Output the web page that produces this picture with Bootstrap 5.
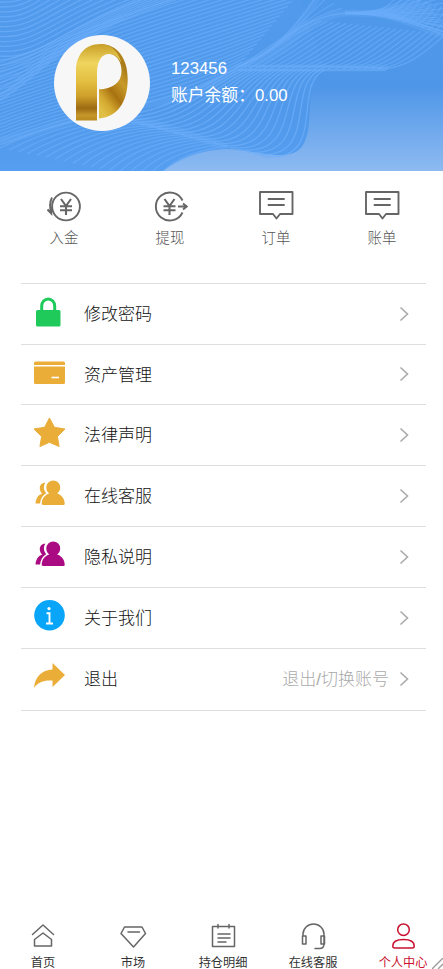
<!DOCTYPE html>
<html lang="zh-CN">
<head>
<meta charset="utf-8">
<meta name="viewport" content="width=device-width, initial-scale=1">
<title>个人中心</title>
<link rel="stylesheet" href="https://cdn.jsdelivr.net/npm/bootstrap@5.3.0/dist/css/bootstrap.min.css">
<style>
body{font-family:"Liberation Sans","Noto Sans CJK SC",sans-serif;color:#333;background:#fff;font-weight:300}
.page{height:969px}
.hero{height:171px;background:linear-gradient(#4f99eb 0,#4e96e8 50%,#8dbaf1 100%);padding:35px 0 0 54px;gap:21px}
.waves{left:0;top:0}
.avatar{width:96px;height:96px;background:#f7f7f7}
.who{font-size:16.8px;line-height:27px;padding-top:20px;font-weight:400}
.quick{padding:18px 8px 0 11px;height:112px;font-size:14.4px;color:#555}
.quick svg{display:block;margin-bottom:3px}
.menu{margin:0 17px 0 21px;border-top:1px solid #dedede}
.menu-item{height:61px;border-bottom:1px solid #dedede;padding:0 17px 0 12px;font-size:17px;color:#111}
.menu-item.short{height:60px}
.menu-item.tall{height:62px}
.menu-item span{padding-top:1px}
.menu-item.short span{padding-top:3px}
.menu-item .chevron{margin-top:-1px}
.menu-item .glyph{margin:-4px 18px 0 0}
.menu-item .people{margin-top:-7px}
.menu-item .hint{color:#aaa;margin-right:10px}
.tabs{margin:0 -5px 0 -2px;height:48px;font-size:12.2px;line-height:12px;font-weight:400;color:#333}
.tabs a{color:inherit;width:90px}
.tabs a.current{color:#c8102e}
.tabs svg{display:block;flex-shrink:0;margin-bottom:4px}
.line{fill:none;stroke:#666;stroke-width:1.5;stroke-linejoin:round;stroke-linecap:round}
.grip{right:0;bottom:0}
</style>
<script src="https://cdn.jsdelivr.net/npm/bootstrap@5.3.0/dist/js/bootstrap.bundle.min.js"></script>
</head>
<body>
<svg width="0" height="0" class="position-absolute">
<defs>
<symbol id="people" viewBox="0 0 33 32"><path d="M12.300 5.800C9 5.500 6.800 8 6.800 11.200c0 2.300.9 4 2.400 5.200C5 18 2.800 21.500 2.500 26.500H7c.6-5 2.600-8.200 6.200-10.300-2.500-3-3.100-6.800-.9-10.400z" fill="currentColor"/><path d="M20.300 3.500a6.900 6.900 0 0 1 6.900 7c0 2.500-1.200 4.700-3.100 6 4.500 1.200 7.400 5.200 7.600 10 0 1-.4 1.500-1.300 1.500H10c-.9 0-1.300-.5-1.300-1.400.2-5 3-8.800 7.600-10.100-1.900-1.300-3-3.500-3-6a6.900 6.900 0 0 1 7-7z" fill="currentColor"/></symbol>
<symbol id="bubble" viewBox="0 0 36 32"><g fill="none" stroke="#666" stroke-width="1.900" stroke-linejoin="round" stroke-linecap="round"><path d="M2 2h32.500v22H22l-3.500 4.500-3.500-4.500H2z"/><path d="M10.500 9h15.500M10.500 15h15.500"/></g></symbol>
<symbol id="chev" viewBox="0 0 10 16"><path d="M1.500 1.500 8.500 8l-7 6.500" fill="none" stroke="#aaa" stroke-width="1.600"/></symbol>
</defs>
</svg>
<div class="page d-flex flex-column overflow-hidden position-relative">
<header class="hero position-relative d-flex overflow-hidden">
  <svg class="waves position-absolute" width="443" height="171"><defs><linearGradient id="sea" x2="0" y2="1"><stop stop-color="#529bec"/><stop offset=".65" stop-color="#5099ea"/><stop offset="1" stop-color="#569ff0"/></linearGradient></defs><path d="M0 0H300L325 70C302 84 316 125 303 145C290 166 250 148 225 149C195 151 178 160 163 171H0z" fill="url(#sea)"/>
  <g fill="none" stroke="#6eb0fb" stroke-width="7" stroke-linecap="round" opacity=".25"><path d="M0 141C60 128 90 108 130 106S200 92 238 67M316 0C290 40 270 55 238 67C290 60 300 14 350 13S410 26 443 34M240 68H385M110 119C160 120 190 135 225 147M0 98C40 70 60 40 120 18"/></g>
  <g id="wave-lines" fill="none" stroke="#6cadfa" stroke-width="1.300"/></svg>
  <div class="avatar rounded-circle position-relative flex-shrink-0">
    <svg class="d-block" width="96" height="96" viewBox="0 0 96 96"><defs><linearGradient id="goldA" x2="0" y2="1"><stop stop-color="#c99f28"/><stop offset=".25" stop-color="#efd55e"/><stop offset=".5" stop-color="#e2bd3f"/><stop offset=".68" stop-color="#cfa02a"/><stop offset=".84" stop-color="#9c6b12"/><stop offset=".93" stop-color="#c6982b"/><stop offset="1" stop-color="#b98a1f"/></linearGradient><linearGradient id="goldB" x1=".8" x2=".3" y2="1"><stop stop-color="#c9a02c"/><stop offset=".2" stop-color="#a97a18"/><stop offset=".42" stop-color="#c89a28"/><stop offset=".65" stop-color="#a87211"/><stop offset=".85" stop-color="#d4a930"/><stop offset="1" stop-color="#e0bf45"/></linearGradient></defs>
    <path d="M45 54.300C58 54 67.500 48 67.500 36C67.500 26 62 19 55 19L46 9C64 9 73.700 24 73.700 44C73.700 69 62 82 45 83.500z" fill="url(#goldB)"/><path d="M22 85.500V36C22 20 31 9 46.500 9C56 9 64 15 67.500 28C64 21.500 60 19 55 19C47 19 43 27 43 38V85.500z" fill="url(#goldA)"/></svg>
  </div>
  <div class="who text-white position-relative"><div>123456</div><div>账户余额：0.00</div></div>
</header>
<section class="quick d-flex text-center">
  <div class="col-3 d-flex flex-column align-items-center"><svg width="36" height="36" viewBox="0 0 36 36"><g fill="none" stroke="#666" stroke-width="1.900"><circle cx="20" cy="17.500" r="13.900"/><path stroke-width="2.100" d="m15 10 5 7 5-7M14 17.200h12M14 21.200h12M20 16v10"/><path d="M6 8.500C3.500 13.500 3.500 18.500 5.300 24.500M1.500 20.500 5.300 24.500V18"/></g></svg><span>入金</span></div>
  <div class="col-3 d-flex flex-column align-items-center"><svg width="36" height="36" viewBox="0 0 36 36"><g fill="none" stroke="#666" stroke-width="1.900"><path d="M30.500 11.500A14 14 0 1 0 30.500 23.500"/><path stroke-width="2.100" d="m12.500 10 5 7 5-7M11.500 17.200h12M11.500 21.200h12M17.500 16v10"/><path d="M26 17.500h8.500M31 14.500l3.700 3-3.700 3"/></g></svg><span>提现</span></div>
  <div class="col-3 d-flex flex-column align-items-center"><svg width="36" height="36" viewBox="0 -1 36 36"><use href="#bubble" width="36" height="32"/></svg><span>订单</span></div>
  <div class="col-3 d-flex flex-column align-items-center"><svg width="36" height="36" viewBox="0 -1 36 36"><use href="#bubble" width="36" height="32"/></svg><span>账单</span></div>
</section>
<main class="menu">
  <div class="menu-item d-flex align-items-center"><svg class="glyph" width="33" height="32" viewBox="0 0 33 32"><rect x="3" y="14" width="24.500" height="16.500" rx="1.500" fill="#1fca5a"/><path d="M8.700 15.500V10a6.500 7 0 0 1 13 0V15.500" fill="none" stroke="#1fca5a" stroke-width="3"/></svg><span class="me-auto">修改密码</span><svg class="chevron" width="10" height="16"><use href="#chev"/></svg></div>
  <div class="menu-item short d-flex align-items-center"><svg class="glyph" width="33" height="32" viewBox="0 0 33 32"><path d="M1 8V6a1.500 1.500 0 0 1 1.500-1.500h28A1.500 1.500 0 0 1 32 6v2z" fill="#e9ad38"/><path d="M1 9.500h31v16a1.500 1.500 0 0 1-1.500 1.500h-28A1.500 1.500 0 0 1 1 25.500z" fill="#e9ad38"/><path d="M18.500 20.500H26" stroke="#fff" stroke-width="1.600"/></svg><span class="me-auto">资产管理</span><svg class="chevron" width="10" height="16"><use href="#chev"/></svg></div>
  <div class="menu-item d-flex align-items-center"><svg class="glyph" width="33" height="32" viewBox="0 0 33 32"><path d="m16.500 1 4.900 9.300 10.600 1.700-7.600 7.500 1.700 10-9.600-4.200-9.600 4.200 1.700-10L1 12l10.600-1.700z" fill="#e9ad38" stroke="#e9ad38" stroke-linejoin="round"/></svg><span class="me-auto">法律声明</span><svg class="chevron" width="10" height="16"><use href="#chev"/></svg></div>
  <div class="menu-item d-flex align-items-center"><svg class="glyph people" style="color:#e9ad38" width="33" height="32"><use href="#people" width="33" height="32"/></svg><span class="me-auto">在线客服</span><svg class="chevron" width="10" height="16"><use href="#chev"/></svg></div>
  <div class="menu-item d-flex align-items-center"><svg class="glyph people" style="color:#aa0a82" width="33" height="32"><use href="#people" width="33" height="32"/></svg><span class="me-auto">隐私说明</span><svg class="chevron" width="10" height="16"><use href="#chev"/></svg></div>
  <div class="menu-item d-flex align-items-center"><svg class="glyph" width="33" height="32" viewBox="0 0 33 32"><circle cx="16.500" cy="15.300" r="15.300" fill="#08a5f8"/><circle cx="16" cy="8.600" r="1.600" fill="#fff"/><path d="M13.500 13.300h3v10M13 23.500h7" fill="none" stroke="#fff" stroke-width="1.900"/></svg><span class="me-auto">关于我们</span><svg class="chevron" width="10" height="16"><use href="#chev"/></svg></div>
  <div class="menu-item tall d-flex align-items-center"><svg class="glyph" width="33" height="32" viewBox="0 0 33 32"><path d="M19.500 1 32 13 19.500 25V18.500C11 18 5.500 19.500 1 26 2 15 8.500 8 19.500 7.500z" fill="#e9ad38"/></svg><span class="me-auto">退出</span><span class="hint">退出/切换账号</span><svg class="chevron" width="10" height="16"><use href="#chev"/></svg></div>
</main>
<nav class="tabs d-flex mt-auto">
  <a class="d-flex flex-column align-items-center text-decoration-none flex-shrink-0" href="#"><svg class="line" width="30" height="32" viewBox="0 0 30 32"><path d="M4.500 13.500 15 4l10.500 9.500M6.500 18.500 15 12l8.500 6.500V25h-17z"/></svg><span>首页</span></a>
  <a class="d-flex flex-column align-items-center text-decoration-none flex-shrink-0" href="#"><svg class="line" width="30" height="32" viewBox="0 0 30 32"><path d="M6.500 6H24l3.500 6.500L15.500 26 3 12.500zM10 11h11.500"/></svg><span>市场</span></a>
  <a class="d-flex flex-column align-items-center text-decoration-none flex-shrink-0" href="#"><svg class="line" width="30" height="32" viewBox="0 0 30 32"><path d="M4.500 5.500h22v20h-22zM10 3.500V7M21 3.500V7M10 13h12M10 17h12M10 21h8"/></svg><span>持仓明细</span></a>
  <a class="d-flex flex-column align-items-center text-decoration-none flex-shrink-0" href="#"><svg class="line" width="30" height="32" viewBox="0 0 30 32"><path d="M5 15V13a10.500 10 0 0 1 21 0v10q0 4.500-4.500 4.500H17M4.500 15h3.500v8H4.500zM23 15h3.500v8H23z"/></svg><span>在线客服</span></a>
  <a class="current d-flex flex-column align-items-center text-decoration-none flex-shrink-0" href="#"><svg class="line" style="stroke:#c8102e" width="30" height="32" viewBox="0 0 30 32"><circle cx="15.500" cy="8.700" r="5.800"/><path d="M4.800 25c0-4 4-6.500 10.700-6.500s10.700 2.500 10.700 6.500q0 2-2 2H6.800q-2 0-2-2z"/></svg><span>个人中心</span></a>
</nav>
<svg class="grip position-absolute" width="11" height="11" viewBox="0 0 11 11"><path d="M0 11 11 0M6 11l5-5" stroke="#999" stroke-width="1.300"/></svg>
</div>
<script>
// Each family blends from one cubic curve to another: [start, end, line count, opacity]
const families = [
  [[0,2,20,3,30,-2,45,-20],[0,56,45,60,65,22,165,-8],12,.75],
  [[0,60,50,56,90,5,200,-20],[0,100,50,70,60,30,240,-20],8,.7],
  [[0,62,60,45,110,10,330,-45],[0,145,90,108,170,108,238,67],25,.65],
  [[0,148,40,128,80,116,125,117],[155,180,170,160,195,150,228,146],18,.65],
  [[108,116,160,116,190,92,238,68],[262,156,330,165,290,84,325,70],20,.75],
  [[235,68,262,55,280,35,315,20],[385,69,410,66,425,52,446,34],22,.65],
  [[238,67,270,55,295,30,318,-6],[238,67,290,45,300,14,350,13],5,.6],
  [[238,66,290,66,340,66,385,68],[238,70,290,70,340,70,385,70],2,.6],
  [[345,12,385,14,405,0,420,-12],[345,14,390,12,430,30,450,37],11,.65],
  [[375,12,395,8,430,-2,450,-12],[390,16,410,20,430,28,450,34],8,.6],
  [[370,13,385,10,395,0,400,-8],[435,32,440,26,446,20,452,10],11,.6]
];
const layer = document.getElementById('wave-lines');
for (const [a, b, n, o] of families) {
  for (let i = 0; i < n; i++) {
    const p = a.map((v, k) => (v + (b[k] - v) * i / (n - 1)).toFixed(1));
    const path = document.createElementNS('http://www.w3.org/2000/svg', 'path');
    path.setAttribute('d', `M${p[0]} ${p[1]}C${p.slice(2).join(' ')}`);
    path.setAttribute('opacity', o);
    layer.appendChild(path);
  }
}
</script>
</body>
</html>
